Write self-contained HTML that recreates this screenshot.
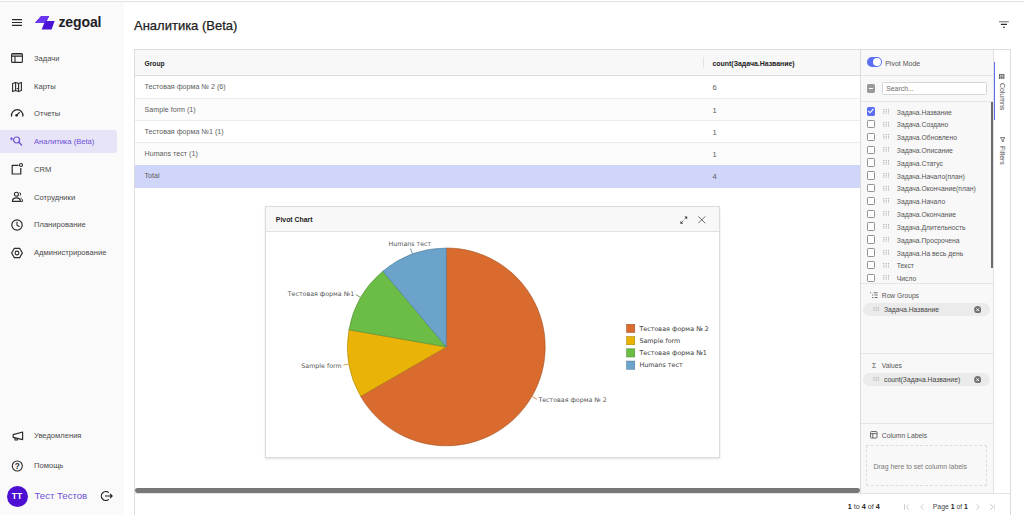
<!DOCTYPE html>
<html lang="ru">
<head>
<meta charset="utf-8">
<title>Аналитика (Beta)</title>
<style>
*{box-sizing:border-box;margin:0;padding:0}
html,body{width:1024px;height:515px;overflow:hidden;background:#fff}
body{font-family:"Liberation Sans",sans-serif;color:#333;position:relative;-webkit-font-smoothing:antialiased}
.abs{position:absolute}
.topline{left:0;top:1px;width:1024px;height:1px;background:#e3e3e3}
/* sidebar */
.side{left:0;top:2px;width:123.7px;height:513px;background:#fafafa}
.mi{position:absolute;left:0;height:23px;width:117px;font-size:7.6px;color:#4a4a4a;line-height:23px;padding-left:34px;white-space:nowrap}
.mi svg{position:absolute;left:10px;top:5px;width:14px;height:14px}
.mi.act{background:#e8e4f8;color:#6c4fd6;border-radius:0 3px 3px 0}
.logo-t{left:58.4px;top:11.4px;font-size:14px;font-weight:700;color:#1d1d26;letter-spacing:-.1px;line-height:18px}
.title{left:134px;top:16px;font-size:13px;line-height:20px;color:#212121;-webkit-text-stroke:.25px #212121;white-space:nowrap}
/* grid */
.grid{left:134px;top:49px;width:877px;height:470px;border:1px solid #dcdcdc;background:#fff}
.hdr{left:135px;top:50px;width:725px;height:26px;background:#f8f8f8;border-bottom:1px solid #dcdcdc}
.hc{position:absolute;top:0;height:26px;line-height:27.5px;font-size:6.7px;font-weight:700;color:#222;white-space:nowrap}
.row{position:absolute;left:135px;width:725px;height:22.4px;border-bottom:1px solid #ececec;font-size:7.15px;color:#5c5c5c;line-height:23.3px;white-space:nowrap}
.row span{position:absolute;top:0}
.row.alt{background:#fcfcfc}
.row.tot{background:#d0d6fa;border-bottom:none}

/* right tool panel */
.tp{left:860px;top:50px;width:133.5px;height:444px;background:#f8f8f8;border-left:1px solid #dcdcdc}
.tpt{position:absolute;font-size:6.9px;color:#555;white-space:nowrap;line-height:10px}
.hl{position:absolute;left:861px;width:133px;height:1px;background:#e6e6e6}
.cb{position:absolute;left:866.6px;width:8.6px;height:8.6px;border:1.1px solid #939393;border-radius:1.2px;background:#fff}
.cb.on{background:#5b6ef5;border-color:#5b6ef5}
.cb.ind{background:#9a9a9a;border-color:#9a9a9a}
.dh{position:absolute;left:883px;width:6.4px;height:5px}
.ct{position:absolute;left:896.8px;font-size:6.8px;color:#555;white-space:nowrap;line-height:10px}
.chip{position:absolute;left:863.2px;width:126.8px;height:12.9px;border-radius:6.45px;background:#ebebeb;font-size:6.8px;color:#444;line-height:13.1px;padding-left:20.8px;white-space:nowrap}
.sb{left:993.3px;top:50px;width:16px;height:444px;background:#fff;border-left:1px solid #e2e2e2}
.vt{position:absolute;writing-mode:vertical-rl;font-size:6.9px;color:#555;white-space:nowrap;line-height:8px}
/* chart */
.dlg{left:265px;top:206px;width:455px;height:252px;background:#fff;border:1px solid #dcdcdc;box-shadow:0 .5px 2px rgba(0,0,0,.12)}
.dlgh{position:absolute;left:0;top:0;width:453px;height:25px;background:#f8f8f8;border-bottom:1px solid #e2e2e2;font-size:6.9px;font-weight:700;color:#222;line-height:26.5px;padding-left:9.8px}
/* bottom */
.hs{left:135px;top:488px;width:725px;height:4.8px;border-radius:2.4px;background:#777}
.pg{left:135px;top:493px;width:875px;height:22px;border-top:1px solid #e2e2e2;background:#fff;font-size:7px;color:#444}
.pg span{position:absolute;top:8px;line-height:10px;white-space:nowrap}
.pg b{color:#222}
</style>
</head>
<body>
<div class="abs topline"></div>
<div class="abs side" id="side">
  <svg class="abs" style="left:12px;top:17.1px;width:10px;height:7px" viewBox="0 0 10 7"><path d="M0 .6h10M0 3.5h10M0 6.4h10" stroke="#2a2a2a" stroke-width="1.1" fill="none"/></svg>
  <svg class="abs" style="left:34.5px;top:14.2px;width:20px;height:13.4px" viewBox="0 0 20 13.4"><path d="M6.2 0H14.2L11.6 5H19.6L16.6 13.4H6.6L9.4 6.8H0Z" fill="#4a12d2"/><path d="M6.2 0H14.2L11.6 5 9.4 6.8H0Z" fill="#6a35f0"/></svg>
  <div class="abs logo-t">zegoal</div>

  <div class="mi" style="top:44.5px"><svg viewBox="0 0 14 14" style="top:4.4px"><rect x="1.6" y="2.6" width="10.8" height="8.8" rx="1" fill="none" stroke="#2a2a2a" stroke-width="1.1"/><path d="M1.6 5.2h10.8M5 5.2v6.2" stroke="#2a2a2a" stroke-width="1.1" fill="none"/><rect x="1.6" y="2.6" width="10.8" height="2.6" fill="#2a2a2a" opacity=".35"/></svg>Задачи</div>
  <div class="mi" style="top:72.6px"><svg viewBox="0 0 14 14"><path d="M2.6 3.4 5.6 2.4 8.6 3.4 11.4 2.4V10.6L8.6 11.6 5.6 10.6 2.6 11.6Z" fill="none" stroke="#2a2a2a" stroke-width="1.1" stroke-linejoin="round"/><path d="M5.6 2.4v8.2M8.6 3.4v8.2" stroke="#2a2a2a" stroke-width="1.1"/><path d="M6.6 8.6h2" stroke="#2a2a2a" stroke-width="1"/></svg>Карты</div>
  <div class="mi" style="top:100.4px"><svg viewBox="0 0 14 14"><path d="M1.53 9A5.7 5.7 0 1 1 12.87 9" fill="none" stroke="#2a2a2a" stroke-width="1.3" stroke-linecap="round"/><circle cx="6.6" cy="8.3" r="1.35" fill="#2a2a2a"/><path d="M6.8 8.1 9.4 5.5" stroke="#2a2a2a" stroke-width="1.1" stroke-linecap="round"/></svg>Отчеты</div>
  <div class="mi act" style="top:127.9px"><svg viewBox="0 0 14 14" style="left:9.4px;top:4.6px"><circle cx="7.6" cy="6" r="3" fill="none" stroke="#6c4fd6" stroke-width="1.2"/><path d="M9.8 8.2 12.6 11" stroke="#6c4fd6" stroke-width="1.3" stroke-linecap="round"/><path d="M1 4.8h3M2.5 3.3v3" stroke="#6c4fd6" stroke-width="1" /></svg>Аналитика (Beta)</div>
  <div class="mi" style="top:155.7px"><svg viewBox="0 0 14 14" style="top:4.4px"><path d="M8.6 3.4H2.2V12H10.8V6" fill="none" stroke="#2a2a2a" stroke-width="1.2" stroke-linejoin="round"/><circle cx="11" cy="3" r="1.5" fill="none" stroke="#2a2a2a" stroke-width="1.1"/></svg>CRM</div>
  <div class="mi" style="top:183.5px"><svg viewBox="0 0 14 14" style="top:4px"><circle cx="6.4" cy="4.2" r="2" fill="none" stroke="#2a2a2a" stroke-width="1.1"/><path d="M2.4 11.4C2.4 8.9 4.2 7.8 6.4 7.8S10.4 8.9 10.4 11.4Z" fill="none" stroke="#2a2a2a" stroke-width="1.15" stroke-linejoin="round"/><path d="M9.4 2.6a1.6 1.6 0 0 1 .4 3M10.6 8.2c1.3.4 2 1.4 2 3.2H11" fill="none" stroke="#2a2a2a" stroke-width="1"/></svg>Сотрудники</div>
  <div class="mi" style="top:211.3px"><svg viewBox="0 0 14 14"><circle cx="7" cy="7" r="5.2" fill="none" stroke="#2a2a2a" stroke-width="1.2"/><path d="M7 4v3.2l2.2 1.3" fill="none" stroke="#2a2a2a" stroke-width="1.1" stroke-linecap="round"/></svg>Планирование</div>
  <div class="mi" style="top:239.1px"><svg viewBox="0 0 14 14"><path d="M4.4 2.3H9.6L12.4 7 9.6 11.7H4.4L1.6 7Z" fill="none" stroke="#2a2a2a" stroke-width="1.2" stroke-linejoin="round"/><circle cx="7" cy="7" r="1.9" fill="none" stroke="#2a2a2a" stroke-width="1.1"/></svg>Администрирование</div>

  <div class="mi" style="top:422.2px"><svg viewBox="0 0 14 14" style="left:10.6px;top:4.4px"><path d="M2.2 5.6 11.6 3V10.6L2.2 8.4Z" fill="none" stroke="#2a2a2a" stroke-width="1.2" stroke-linejoin="round"/><path d="M4 8.8v2.2h2.4V9.4" fill="none" stroke="#2a2a2a" stroke-width="1.1"/></svg>Уведомления</div>
  <div class="mi" style="top:452.2px"><svg viewBox="0 0 14 14"><circle cx="7.3" cy="7" r="5" fill="none" stroke="#2a2a2a" stroke-width="1.1"/><text x="7.3" y="9.9" font-size="8.2" font-weight="700" text-anchor="middle" fill="#2a2a2a" font-family="Liberation Sans, sans-serif">?</text></svg>Помощь</div>

  <div class="abs" style="left:6.5px;top:483.5px;width:21px;height:21px;border-radius:50%;background:#4d0fd2;color:#fff;font-size:8.6px;font-weight:700;text-align:center;line-height:21.4px">ТТ</div>
  <div class="abs" style="left:34.5px;top:486px;font-size:9.6px;line-height:16px;color:#6c4fd6;white-space:nowrap">Тест Тестов</div>
  <svg class="abs" style="left:99.6px;top:487.7px;width:13px;height:12px" viewBox="0 0 13 12"><path d="M8.8 2.6A4.5 4.5 0 1 0 8.8 9.4" fill="none" stroke="#1d1d1d" stroke-width="1.2"/><path d="M5 6h7M10 3.8 12.2 6 10 8.2" fill="none" stroke="#1d1d1d" stroke-width="1.1"/></svg>
</div>
<div class="abs title">Аналитика (Beta)</div>
<div class="abs grid"></div>
<div class="abs hdr">
  <div class="hc" style="left:9.5px">Group</div>
  <div class="hc" style="left:577.5px;font-size:6.93px">count(Задача.Название)</div>
  <div class="abs" style="left:568px;top:7px;width:1px;height:11px;background:#e2e2e2"></div>
</div>
<div class="row" style="top:76.2px"><span style="left:9.5px">Тестовая форма № 2 (6)</span><span style="left:577.5px;font-size:7.6px">6</span></div>
<div class="row alt" style="top:98.6px"><span style="left:9.5px">Sample form (1)</span><span style="left:577.5px;font-size:7.6px">1</span></div>
<div class="row" style="top:121px"><span style="left:9.5px">Тестовая форма №1 (1)</span><span style="left:577.5px;font-size:7.6px">1</span></div>
<div class="row alt" style="top:143.4px"><span style="left:9.5px">Humans тест (1)</span><span style="left:577.5px;font-size:7.6px">1</span></div>
<div class="row tot" style="top:165.3px"><span style="left:9.5px">Total</span><span style="left:577.5px;font-size:7.6px">4</span></div>

<div class="abs tp"></div>
<!-- pivot mode toggle -->
<div class="abs" style="left:867px;top:57.4px;width:14.6px;height:10px;border-radius:5px;background:#5b6ef5"></div>
<div class="abs" style="left:872.6px;top:58.4px;width:8px;height:8px;border-radius:50%;background:#fff"></div>
<div class="tpt" style="left:885.2px;top:58.5px;font-size:7px">Pivot Mode</div>
<div class="hl" style="top:75px"></div>
<div class="cb ind" style="top:84.4px"><div style="position:absolute;left:1.2px;top:2.6px;width:4px;height:1.2px;background:#fff"></div></div>
<div class="abs" style="left:882.2px;top:82.4px;width:104.8px;height:12.4px;border:1px solid #d6d6d6;border-radius:1.5px;background:#fff;font-size:6.9px;color:#6a6a6a;line-height:12px;padding-left:3px">Search...</div>
<div class="hl" style="top:101.4px"></div>
<div class="cb on" style="top:107.0px"><svg viewBox="0 0 8 8" style="position:absolute;left:-.6px;top:-.6px;width:7.6px;height:7.6px"><path d="M1.3 4.1 3.2 6 6.9 1.9" fill="none" stroke="#fff" stroke-width="1.1"/></svg></div><svg class="dh" style="top:108.7px" viewBox="0 0 6.4 5"><path d="M.8 0v5M3.2 0v5M5.6 0v5" stroke="#9c9c9c" stroke-width=".9" stroke-dasharray="1 .8"/></svg><div class="ct" style="top:107.5px">Задача.Название</div>
<div class="cb" style="top:119.8px"></div><svg class="dh" style="top:121.5px" viewBox="0 0 6.4 5"><path d="M.8 0v5M3.2 0v5M5.6 0v5" stroke="#9c9c9c" stroke-width=".9" stroke-dasharray="1 .8"/></svg><div class="ct" style="top:120.3px">Задача.Создано</div>
<div class="cb" style="top:132.6px"></div><svg class="dh" style="top:134.3px" viewBox="0 0 6.4 5"><path d="M.8 0v5M3.2 0v5M5.6 0v5" stroke="#9c9c9c" stroke-width=".9" stroke-dasharray="1 .8"/></svg><div class="ct" style="top:133.1px">Задача.Обновлено</div>
<div class="cb" style="top:145.5px"></div><svg class="dh" style="top:147.2px" viewBox="0 0 6.4 5"><path d="M.8 0v5M3.2 0v5M5.6 0v5" stroke="#9c9c9c" stroke-width=".9" stroke-dasharray="1 .8"/></svg><div class="ct" style="top:146.0px">Задача.Описание</div>
<div class="cb" style="top:158.3px"></div><svg class="dh" style="top:160.0px" viewBox="0 0 6.4 5"><path d="M.8 0v5M3.2 0v5M5.6 0v5" stroke="#9c9c9c" stroke-width=".9" stroke-dasharray="1 .8"/></svg><div class="ct" style="top:158.8px">Задача.Статус</div>
<div class="cb" style="top:171.1px"></div><svg class="dh" style="top:172.8px" viewBox="0 0 6.4 5"><path d="M.8 0v5M3.2 0v5M5.6 0v5" stroke="#9c9c9c" stroke-width=".9" stroke-dasharray="1 .8"/></svg><div class="ct" style="top:171.6px">Задача.Начало(план)</div>
<div class="cb" style="top:183.9px"></div><svg class="dh" style="top:185.6px" viewBox="0 0 6.4 5"><path d="M.8 0v5M3.2 0v5M5.6 0v5" stroke="#9c9c9c" stroke-width=".9" stroke-dasharray="1 .8"/></svg><div class="ct" style="top:184.4px">Задача.Окончание(план)</div>
<div class="cb" style="top:196.7px"></div><svg class="dh" style="top:198.4px" viewBox="0 0 6.4 5"><path d="M.8 0v5M3.2 0v5M5.6 0v5" stroke="#9c9c9c" stroke-width=".9" stroke-dasharray="1 .8"/></svg><div class="ct" style="top:197.2px">Задача.Начало</div>
<div class="cb" style="top:209.6px"></div><svg class="dh" style="top:211.3px" viewBox="0 0 6.4 5"><path d="M.8 0v5M3.2 0v5M5.6 0v5" stroke="#9c9c9c" stroke-width=".9" stroke-dasharray="1 .8"/></svg><div class="ct" style="top:210.1px">Задача.Окончание</div>
<div class="cb" style="top:222.4px"></div><svg class="dh" style="top:224.1px" viewBox="0 0 6.4 5"><path d="M.8 0v5M3.2 0v5M5.6 0v5" stroke="#9c9c9c" stroke-width=".9" stroke-dasharray="1 .8"/></svg><div class="ct" style="top:222.9px">Задача.Длительность</div>
<div class="cb" style="top:235.2px"></div><svg class="dh" style="top:236.9px" viewBox="0 0 6.4 5"><path d="M.8 0v5M3.2 0v5M5.6 0v5" stroke="#9c9c9c" stroke-width=".9" stroke-dasharray="1 .8"/></svg><div class="ct" style="top:235.7px">Задача.Просрочена</div>
<div class="cb" style="top:248.0px"></div><svg class="dh" style="top:249.7px" viewBox="0 0 6.4 5"><path d="M.8 0v5M3.2 0v5M5.6 0v5" stroke="#9c9c9c" stroke-width=".9" stroke-dasharray="1 .8"/></svg><div class="ct" style="top:248.5px">Задача.На весь день</div>
<div class="cb" style="top:260.8px"></div><svg class="dh" style="top:262.5px" viewBox="0 0 6.4 5"><path d="M.8 0v5M3.2 0v5M5.6 0v5" stroke="#9c9c9c" stroke-width=".9" stroke-dasharray="1 .8"/></svg><div class="ct" style="top:261.3px">Текст</div>
<div class="cb" style="top:273.7px"></div><svg class="dh" style="top:275.4px" viewBox="0 0 6.4 5"><path d="M.8 0v5M3.2 0v5M5.6 0v5" stroke="#9c9c9c" stroke-width=".9" stroke-dasharray="1 .8"/></svg><div class="ct" style="top:274.2px">Число</div>

<div class="abs" style="left:991px;top:102.4px;width:2.6px;height:166px;background:#6a6a6a"></div>
<div class="hl" style="top:283px"></div>
<svg class="abs" style="left:870.4px;top:292.3px;width:7.6px;height:6.2px" viewBox="0 0 7.6 6.2"><path d="M0 .7h1M3.6 .7h4M2 3.1h1.2M4.4 3.1h3.2M2 5.5h1.2M4.4 5.5h3.2" stroke="#707070" stroke-width="1.05"/></svg>
<div class="tpt" style="left:881.8px;top:290.7px;font-size:6.7px">Row Groups</div>
<div class="chip" style="top:303px">Задача.Название</div>
<div class="hl" style="top:353.4px"></div>
<div class="tpt" style="left:872px;top:360.8px">Σ</div>
<div class="tpt" style="left:881.8px;top:361.1px;font-size:6.7px">Values</div>
<div class="chip" style="top:373px">count(Задача.Название)</div>
<div class="hl" style="top:422.7px"></div>
<svg class="abs" style="left:870.3px;top:431.2px;width:7.6px;height:7.6px" viewBox="0 0 7 7"><rect x=".5" y=".5" width="6" height="6" rx=".8" fill="none" stroke="#666" stroke-width=".9"/><path d="M.5 2.4h6M2.6 2.4v4.1" stroke="#666" stroke-width=".9"/></svg>
<div class="tpt" style="left:881.8px;top:431.2px;font-size:6.8px">Column Labels</div>
<div class="abs" style="left:866.4px;top:445.4px;width:120.8px;height:41px;border:1px dashed #dedede"></div>
<div class="tpt" style="left:873.6px;top:461.8px;color:#777">Drag here to set column labels</div>
<svg class="abs" style="left:873px;top:307.3px;width:6.6px;height:4.2px" viewBox="0 0 6.6 4.6"><path d="M.8 0v4.6M3.2 0v4.6M5.6 0v4.6" stroke="#9c9c9c" stroke-width=".9" stroke-dasharray="1 .8"/></svg>
<svg class="abs" style="left:974px;top:305.75px;width:7.4px;height:7.4px" viewBox="0 0 7.4 7.4"><circle cx="3.7" cy="3.7" r="3.6" fill="#727272"/><path d="M2.3 2.3 5.1 5.1M5.1 2.3 2.3 5.1" stroke="#fff" stroke-width=".9"/></svg>
<svg class="abs" style="left:873px;top:377.3px;width:6.6px;height:4.2px" viewBox="0 0 6.6 4.6"><path d="M.8 0v4.6M3.2 0v4.6M5.6 0v4.6" stroke="#9c9c9c" stroke-width=".9" stroke-dasharray="1 .8"/></svg>
<svg class="abs" style="left:974px;top:375.75px;width:7.4px;height:7.4px" viewBox="0 0 7.4 7.4"><circle cx="3.7" cy="3.7" r="3.6" fill="#727272"/><path d="M2.3 2.3 5.1 5.1M5.1 2.3 2.3 5.1" stroke="#fff" stroke-width=".9"/></svg>

<div class="abs sb"></div>
<div class="abs" style="left:994px;top:62.4px;width:1.2px;height:57.4px;background:#5b6ef5"></div>
<svg class="abs" style="left:999.4px;top:74px;width:5.4px;height:5.4px" viewBox="0 0 5.4 5.4"><rect x=".4" y=".4" width="4.6" height="4.6" fill="none" stroke="#555" stroke-width=".8"/><path d="M.4 1.9h4.6M.4 3.4h4.6M2.7 1.9v3.1" stroke="#555" stroke-width=".7"/></svg>
<div class="vt" style="left:998.2px;top:82.8px">Columns</div>
<svg class="abs" style="left:1000px;top:136.8px;width:5.4px;height:5.4px" viewBox="0 0 5.4 5.4"><path d="M.4 .6h4.6L3.2 2.8v2.1L2.2 4.3V2.8Z" fill="none" stroke="#555" stroke-width=".8" stroke-linejoin="round"/></svg>
<div class="vt" style="left:998.2px;top:145.6px">Filters</div>

<div class="abs dlg">
  <div class="dlgh">Pivot Chart</div>
  <svg class="abs" style="left:414.2px;top:8.6px;width:7.6px;height:8.4px" viewBox="0 0 7.6 8.4"><path d="M4.4 .5H7.2V3.3ZM.4 5V7.8H3.2Z" fill="#333"/><path d="M6 1.7 4.4 3.4M3.2 4.8 1.6 6.6" stroke="#444" stroke-width=".8"/></svg>
  <svg class="abs" style="left:432.4px;top:9.4px;width:7.6px;height:7.6px" viewBox="0 0 7.6 7.6"><path d="M.4 .4 7.2 7.2M7.2 .4 .4 7.2" stroke="#444" stroke-width=".8"/></svg>
  <svg class="abs" style="left:0;top:0;width:453px;height:250px" viewBox="0 0 453 250"><path d="M180.30 139.90 L180.30 41.00 A98.90 98.90 0 1 1 94.65 189.35 Z" fill="#d96b2e" stroke="#9a4c20" stroke-width=".55"/><path d="M180.30 139.90 L94.65 189.35 A98.90 98.90 0 0 1 82.90 122.73 Z" fill="#e9b307" stroke="#a57f05" stroke-width=".55"/><path d="M180.30 139.90 L82.90 122.73 A98.90 98.90 0 0 1 116.73 64.14 Z" fill="#6cbd45" stroke="#4d8631" stroke-width=".55"/><path d="M180.30 139.90 L116.73 64.14 A98.90 98.90 0 0 1 180.30 41.00 Z" fill="#6ca3cb" stroke="#4d7390" stroke-width=".55"/><path d="M266.21 189.50 L270.89 192.20" stroke="#c8622a" stroke-width=".75"/><path d="M82.61 157.13 L77.29 158.06" stroke="#c8912a" stroke-width=".75"/><path d="M94.39 90.30 L89.71 87.60" stroke="#4d8631" stroke-width=".75"/><path d="M146.37 46.68 L144.52 41.61" stroke="#4d7390" stroke-width=".75"/>
    <text x="272.4" y="194.6" font-family="DejaVu Sans, Liberation Sans, sans-serif" font-size="6.3" fill="#555">Тестовая форма № 2</text>
    <text x="75.6" y="160.8" font-family="DejaVu Sans, Liberation Sans, sans-serif" font-size="6.3" fill="#555" text-anchor="end">Sample form</text>
    <text x="88.2" y="89.2" font-family="DejaVu Sans, Liberation Sans, sans-serif" font-size="6.3" fill="#555" text-anchor="end">Тестовая форма №1</text>
    <text x="165.2" y="39.2" font-family="DejaVu Sans, Liberation Sans, sans-serif" font-size="6.3" fill="#555" text-anchor="end">Humans тест</text>
    <rect x="360.6" y="117.3" width="8.2" height="8.2" fill="#d96b2e" stroke="#9a4c20" stroke-width=".5"/>
    <rect x="360.6" y="129.55" width="8.2" height="8.2" fill="#e9b307" stroke="#a57f05" stroke-width=".5"/>
    <rect x="360.6" y="141.8" width="8.2" height="8.2" fill="#6cbd45" stroke="#4d8631" stroke-width=".5"/>
    <rect x="360.6" y="154.05" width="8.2" height="8.2" fill="#6ca3cb" stroke="#4d7390" stroke-width=".5"/>
    <text x="373.4" y="123.7" font-family="DejaVu Sans, Liberation Sans, sans-serif" font-size="6.4" fill="#3a3a3a">Тестовая форма № 2</text>
    <text x="373.4" y="135.95" font-family="DejaVu Sans, Liberation Sans, sans-serif" font-size="6.4" fill="#3a3a3a">Sample form</text>
    <text x="373.4" y="148.2" font-family="DejaVu Sans, Liberation Sans, sans-serif" font-size="6.4" fill="#3a3a3a">Тестовая форма №1</text>
    <text x="373.4" y="160.45" font-family="DejaVu Sans, Liberation Sans, sans-serif" font-size="6.4" fill="#3a3a3a">Humans тест</text>
  </svg>
</div>

<div class="abs hs"></div>
<div class="abs pg">
  <span style="left:712.8px;font-size:7.2px"><b>1</b> to <b>4</b> of <b>4</b></span>
  <span style="left:797.8px;font-size:6.85px">Page <b>1</b> of <b>1</b></span>
  <svg class="abs" style="left:769px;top:9.6px;width:5.4px;height:6px" viewBox="0 0 5.4 6"><path d="M.5 .3v5.4M5 .4 2.4 3 5 5.6" fill="none" stroke="#bbb" stroke-width=".8"/></svg>
  <svg class="abs" style="left:784.6px;top:9.6px;width:4px;height:6px" viewBox="0 0 4 6"><path d="M3.4 .4.8 3 3.4 5.6" fill="none" stroke="#bbb" stroke-width=".8"/></svg>
  <svg class="abs" style="left:841px;top:9.6px;width:4px;height:6px" viewBox="0 0 4 6"><path d="M.6 .4 3.2 3 .6 5.6" fill="none" stroke="#bbb" stroke-width=".8"/></svg>
  <svg class="abs" style="left:855px;top:9.6px;width:5.4px;height:6px" viewBox="0 0 5.4 6"><path d="M4.9 .3v5.4M.4 .4 3 3 .4 5.6" fill="none" stroke="#bbb" stroke-width=".8"/></svg>
</div>
<!-- top-right filter icon -->
<svg class="abs" style="left:999.4px;top:21.2px;width:10px;height:7px" viewBox="0 0 10 7"><path d="M0 .7h9.8" stroke="#8c8c8c" stroke-width="1.3"/><path d="M1.9 3.4h6M3.9 6.2h2" stroke="#2a2a2a" stroke-width="1.1"/></svg>
</body>
</html>
